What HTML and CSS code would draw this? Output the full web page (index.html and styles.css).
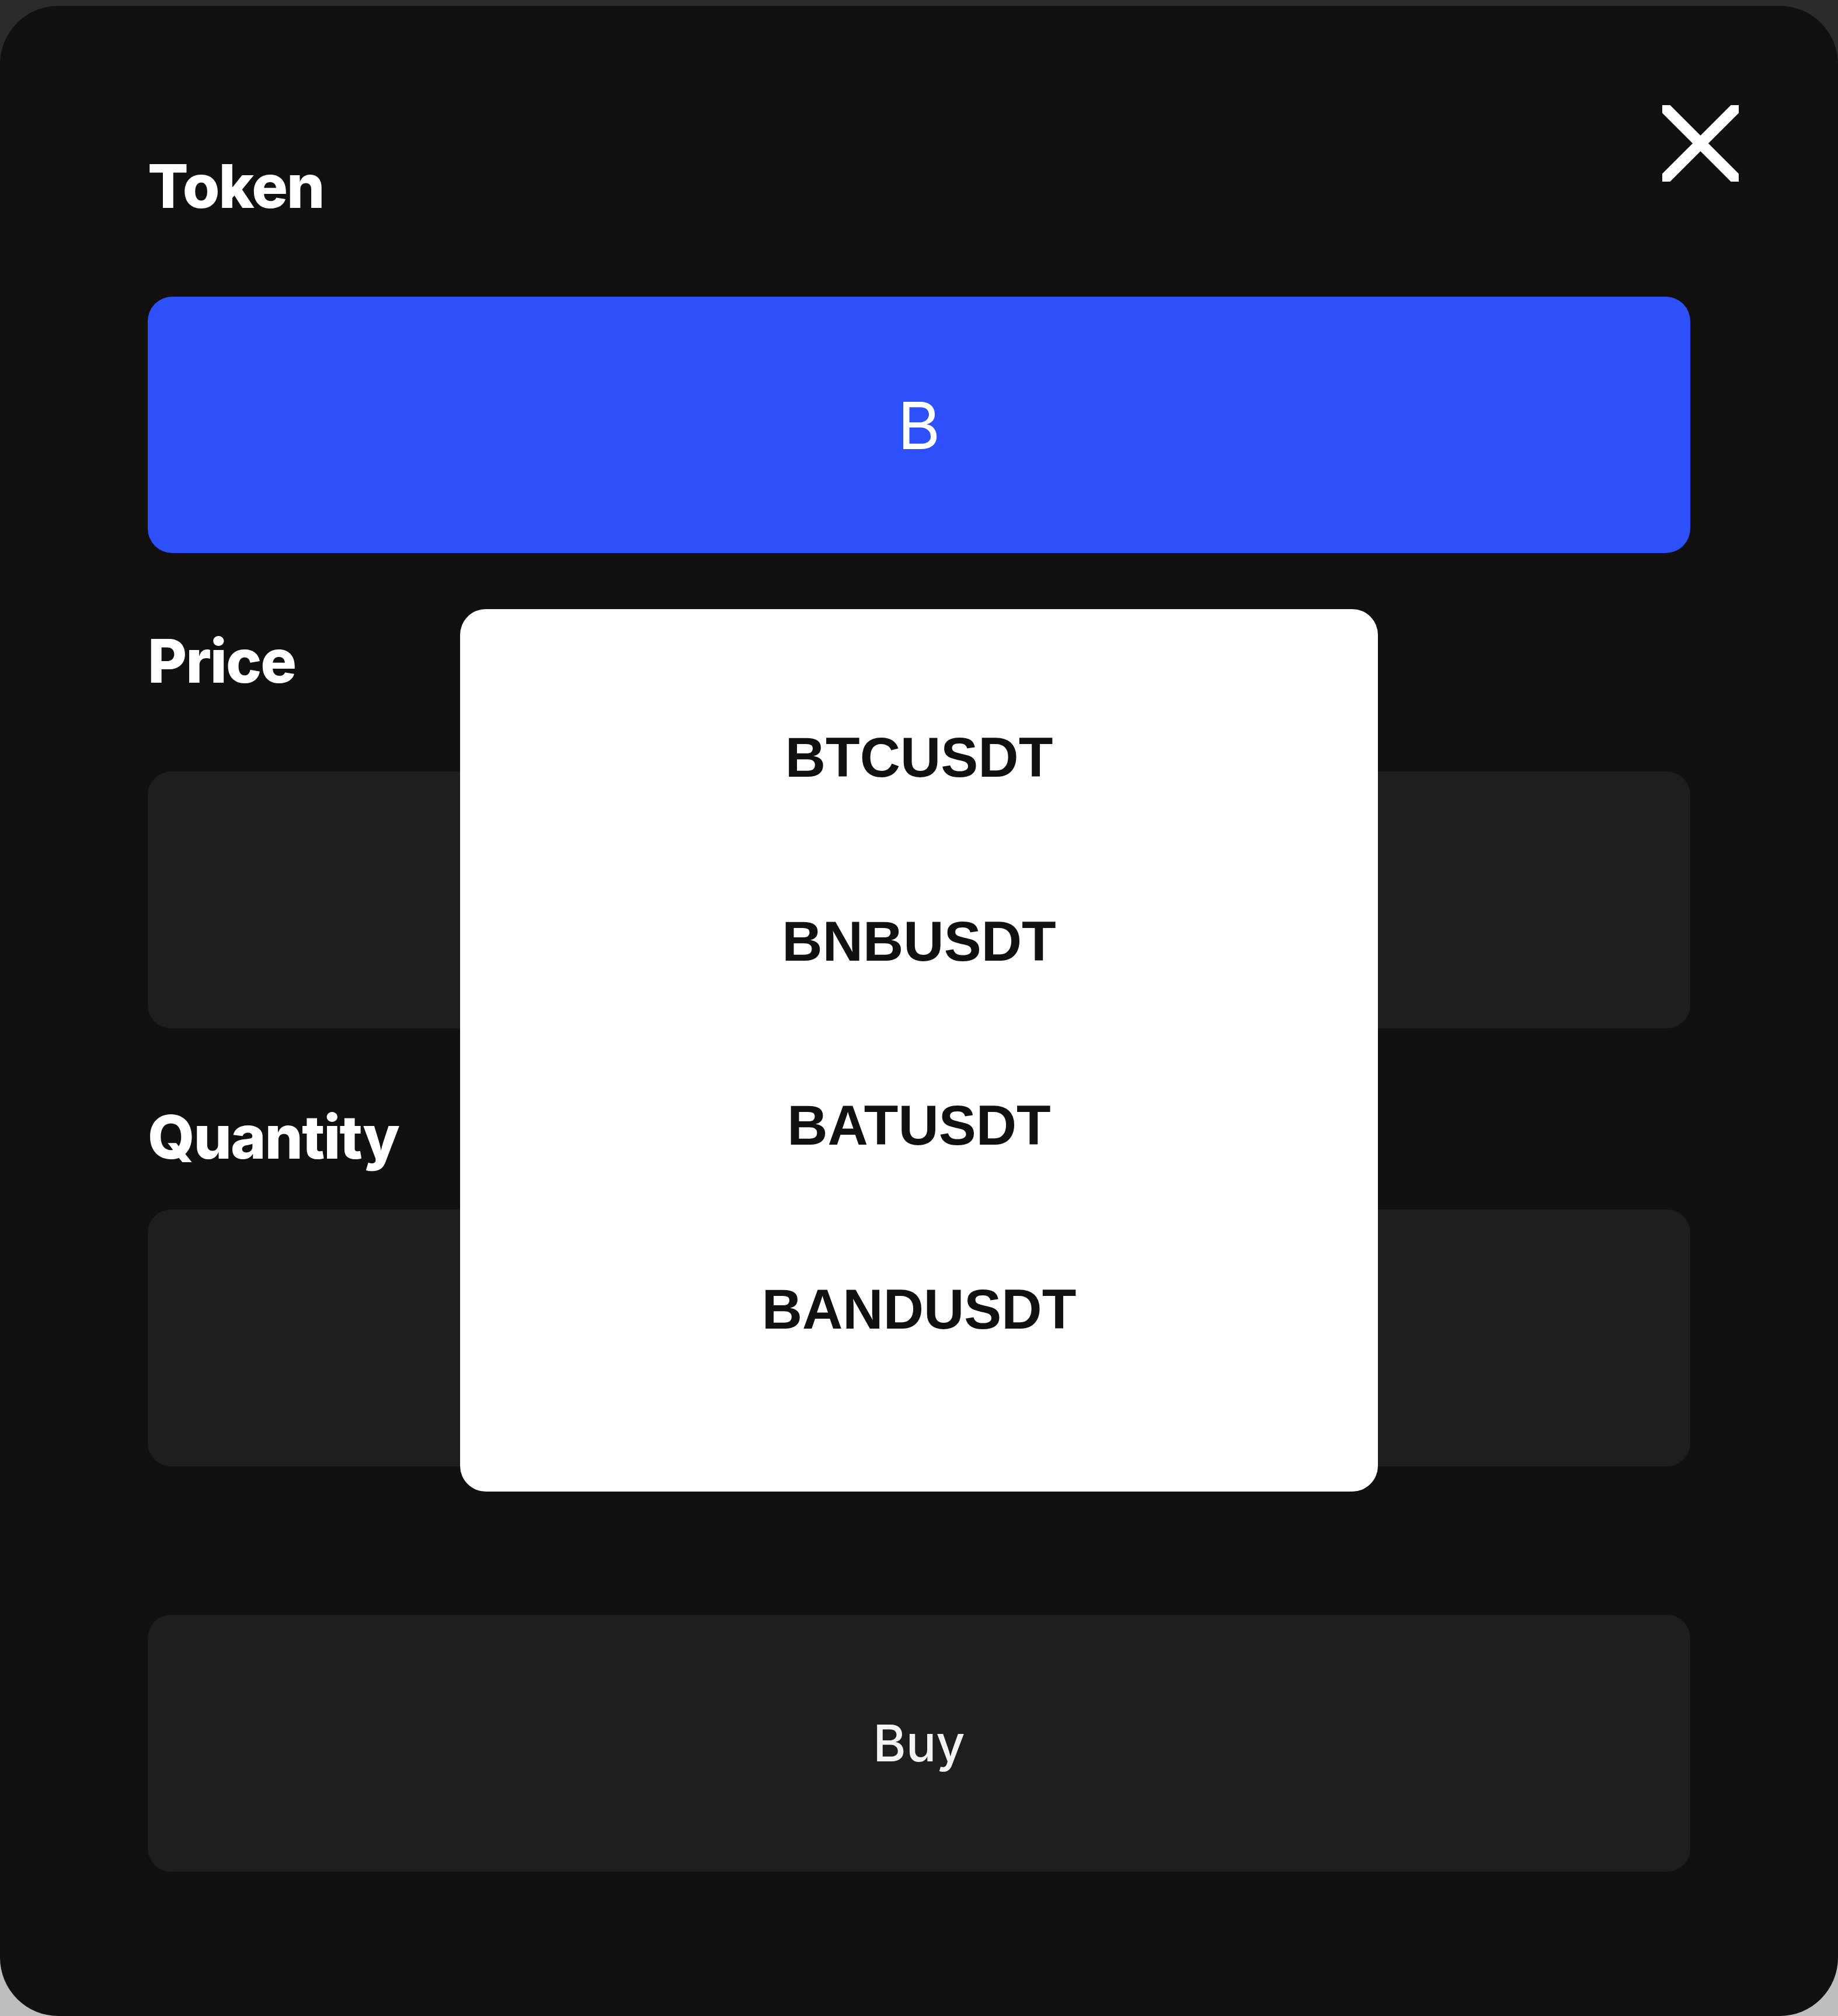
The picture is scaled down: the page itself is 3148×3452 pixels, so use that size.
FILE: index.html
```html
<!DOCTYPE html>
<html lang="en">
<head>
<meta charset="utf-8">
<title>Order</title>
<link rel="stylesheet" href="styles.css">
</head>
<body>
<div class="modal">
  <button class="close" aria-label="Close">
    <svg viewBox="0 0 131 131" width="131" height="131"><path d="M0 0L131 131M131 0L0 131" stroke="#fff" stroke-width="19" fill="none"/></svg>
  </button>
  <form class="form">
    <div class="label label-token">Token</div>
    <div class="token-select">B</div>
    <div class="label label-price">Price</div>
    <div class="field field-price"></div>
    <div class="label label-qty">Quantity</div>
    <div class="field field-qty"></div>
    <div class="buy">Buy</div>
  </form>
  <ul class="dropdown">
    <li>BTCUSDT</li>
    <li>BNBUSDT</li>
    <li>BATUSDT</li>
    <li>BANDUSDT</li>
  </ul>
</div>
</body>
</html>
```
FILE: styles.css
```css
html, body {
  margin: 0;
  padding: 0;
}
body {
  width: 3148px;
  height: 3452px;
  overflow: hidden;
  background: linear-gradient(to bottom, #2b2b2b 0, #2b2b2b 50%, #bebebe 50%, #bebebe 100%);
}
.modal {
  position: relative;
  margin-top: 10px;
  height: 3442px;
  background: #121110;
  border-radius: 100px;
  box-sizing: border-box;
  padding: 257px 253px 0 253px;
}
.close {
  position: absolute;
  top: 170px;
  right: 170px;
  width: 131px;
  height: 131px;
  padding: 0;
  border: 0;
  background: none;
  display: block;
}
.close svg {
  display: block;
  overflow: hidden;
}
.form {
  display: flex;
  flex-direction: column;
}
.label {
  font-family: Inter, "Liberation Sans", sans-serif;
  font-weight: 800;
  font-size: 103px;
  line-height: 104px;
  height: 104px;
  letter-spacing: -2px;
  color: #ffffff;
}
.label-price { margin-top: 133px; }
.label-qty { margin-top: 134px; }
.token-select {
  margin-top: 137px;
  height: 439px;
  border-radius: 42px;
  background: #2e50fa;
  color: #ffffff;
  display: flex;
  align-items: center;
  justify-content: center;
  font-family: Inter, "Liberation Sans", sans-serif;
  font-weight: 400;
  font-size: 112px;
}
.field {
  height: 440px;
  border-radius: 40px;
  background: #1e1e1e;
}
.field-price { margin-top: 137px; }
.field-qty { margin-top: 72px; }
.buy {
  margin-top: 254px;
  height: 440px;
  border-radius: 40px;
  background: #1e1e1e;
  color: #f4f4f4;
  display: flex;
  align-items: center;
  justify-content: center;
  font-family: Inter, "Liberation Sans", sans-serif;
  font-weight: 500;
  font-size: 86px;
}
.dropdown {
  position: absolute;
  left: 788px;
  top: 1033px;
  width: 1572px;
  height: 1511px;
  margin: 0;
  padding: 96px 0 0 0;
  box-sizing: border-box;
  list-style: none;
  background: #ffffff;
  border-radius: 44px;
  display: flex;
  flex-direction: column;
}
.dropdown li {
  height: 315px;
  display: flex;
  align-items: center;
  justify-content: center;
  font-family: "Liberation Sans", Arial, sans-serif;
  font-weight: 700;
  font-size: 96px;
  color: #111111;
}
```
